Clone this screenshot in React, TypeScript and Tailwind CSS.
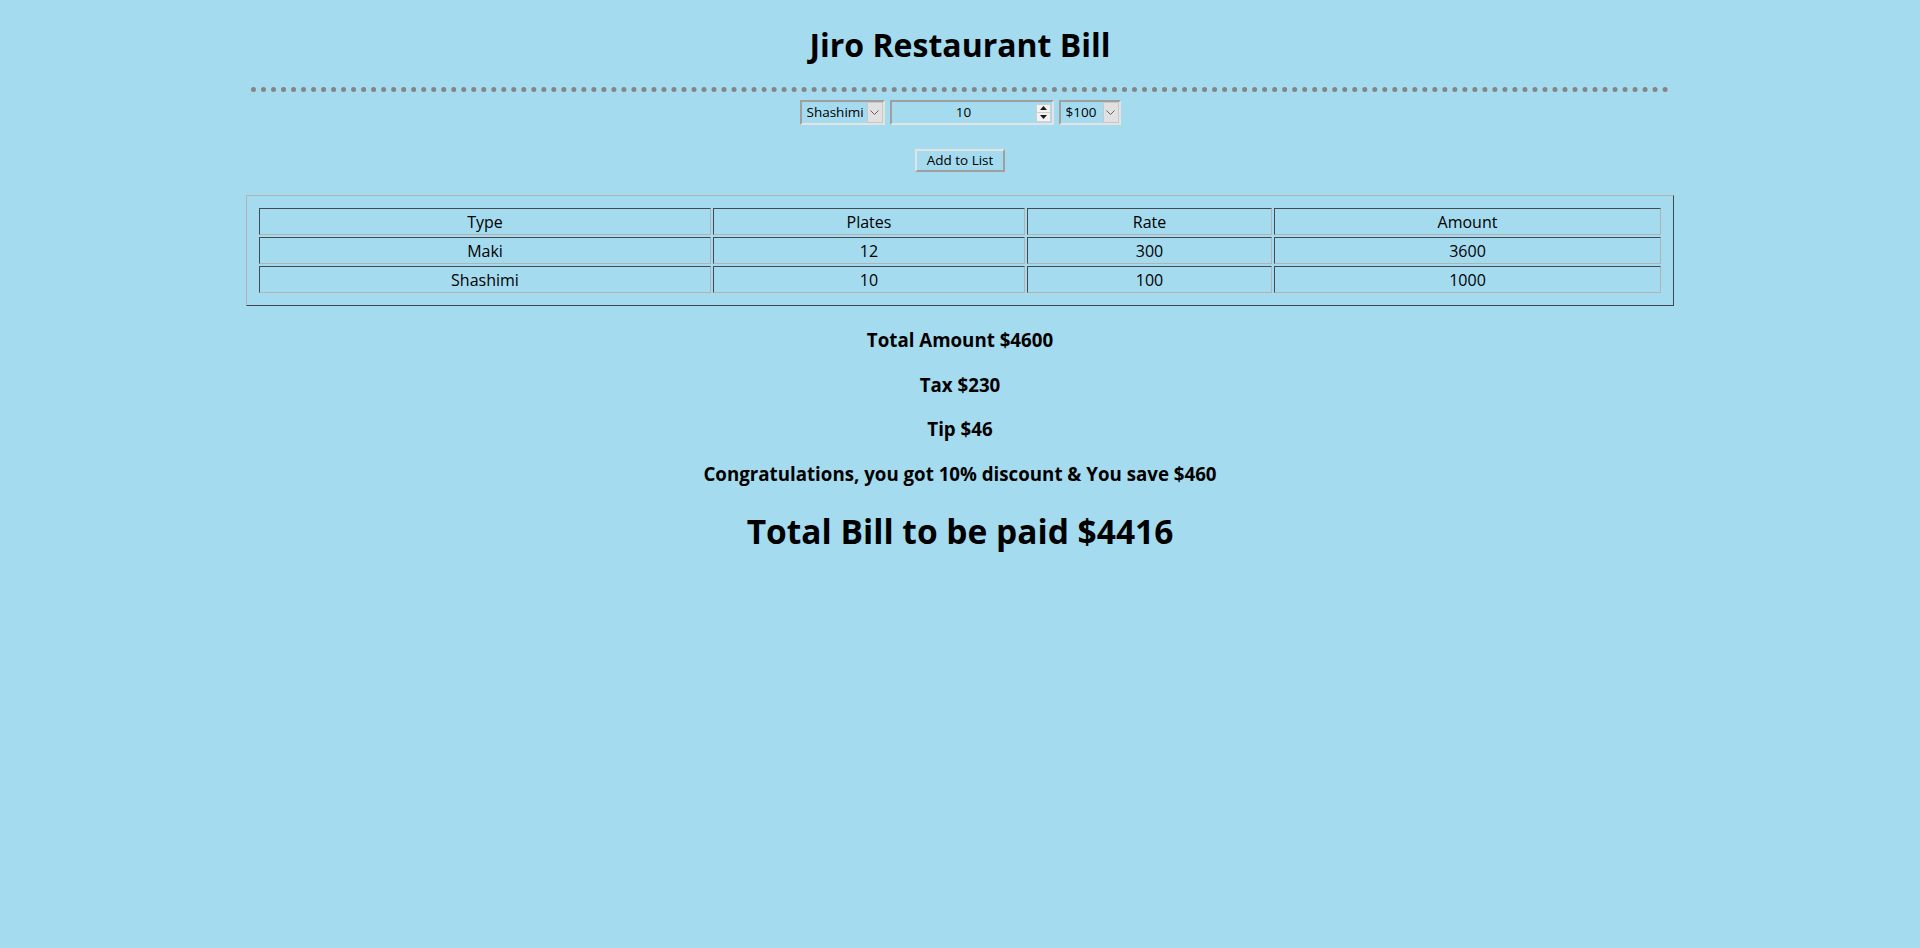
import React from "react";

type Order = {
    type: string,
    plates: number,
    rate: number,
}

const orders: Order[] = [
    { type: "Maki", plates: 12, rate: 300 },
    { type: "Shashimi", plates: 10, rate: 100 },
];

// inset / outset borders, windows classic style
const inset = "border-2 border-t-[#9f9f9f] border-l-[#9f9f9f] border-b-[#e3e3e3] border-r-[#e3e3e3]";
const outset = "border-2 border-t-[#e3e3e3] border-l-[#e3e3e3] border-b-[#9f9f9f] border-r-[#9f9f9f]";
const cellBorder = "border border-t-[#424a54] border-l-[#424a54] border-b-[#b3b3b3] border-r-[#b3b3b3]";

const ArrowBox = () => (
    <span className="flex h-[21px] w-[16px] shrink-0 items-center justify-center border border-[#c8c8c8] bg-[#e1e1e1]">
        <svg width="9" height="5" viewBox="0 0 9 5">
            <path d="M0.5 0.5 L4.5 4.5 L8.5 0.5" fill="none" stroke="#606060" strokeWidth="1" />
        </svg>
    </span>
)

const Spinner = () => (
    <span className="flex h-[18px] w-[15px] shrink-0 flex-col border border-[#cfcfcf] bg-[#f3f3f3]">
        <span className="flex flex-1 items-center justify-center border-b border-[#cfcfcf]">
            <svg width="7" height="4" viewBox="0 0 7 4"><path d="M3.5 0 L7 4 L0 4 Z" fill="#1a1a1a" /></svg>
        </span>
        <span className="flex flex-1 items-center justify-center">
            <svg width="7" height="4" viewBox="0 0 7 4"><path d="M0 0 L7 0 L3.5 4 Z" fill="#1a1a1a" /></svg>
        </span>
    </span>
)

type PickerProps = {
    width: string,
    value: string,
    options: string[],
}

const Picker = ({ width, value, options }: PickerProps) => (
    <div className={`flex h-[25px] items-center pl-[5px] ${inset} ${width}`}>
        <select
            defaultValue={value}
            className="min-w-0 flex-1 appearance-none bg-transparent text-[13.5px] outline-none"
        >
            {options.map((o) => <option key={o}>{o}</option>)}
        </select>
        <ArrowBox />
    </div>
)

export default function App() {
    const total = orders.reduce((sum, o) => sum + o.plates * o.rate, 0);
    const tax = total * 0.05;
    const tip = total * 0.01;
    const discount = total * 0.1;
    const bill = total + tax + tip - discount;

    return (
        <div className="min-h-screen bg-[#a4dbef] font-['Comic_Sans_MS','Open_Sans',sans-serif] text-black">
            <div className="mx-auto flex w-[1428px] flex-col items-center pt-[23px]">
                <h1 className="text-[32px] font-bold leading-[44px]">Jiro Restaurant Bill</h1>

                <hr className="mt-[20px] w-[1418px] border-0 border-t-[5px] border-dotted border-[#858585]" />

                <div className="mt-[8px] flex gap-[5px]">
                    <Picker width="w-[85px]" value="Shashimi" options={["Maki", "Shashimi", "Nigiri"]} />
                    <div className={`flex h-[25px] w-[164px] items-center pr-[1px] ${inset}`}>
                        <input
                            type="number"
                            defaultValue={10}
                            className="min-w-0 flex-1 bg-transparent text-center text-[13.5px] outline-none [appearance:textfield] [&::-webkit-inner-spin-button]:appearance-none [&::-webkit-outer-spin-button]:appearance-none"
                        />
                        <Spinner />
                    </div>
                    <Picker width="w-[62px]" value="$100" options={["$100", "$200", "$300"]} />
                </div>

                <button className={`mt-[24px] h-[23px] w-[90px] bg-transparent text-[13.5px] leading-none ${outset}`}>
                    Add to List
                </button>

                <div className="mt-[23px] w-full border border-t-[#b3b3b3] border-l-[#b3b3b3] border-b-[#3f4751] border-r-[#3f4751] p-[10px]">
                    <table className="w-full table-fixed border-separate border-spacing-[2px] text-[16px]">
                        <thead>
                            <tr>
                                <th className={`w-[452px] pt-[2px] font-normal leading-[23px] ${cellBorder}`}>Type</th>
                                <th className={`w-[312px] pt-[2px] font-normal leading-[23px] ${cellBorder}`}>Plates</th>
                                <th className={`w-[245px] pt-[2px] font-normal leading-[23px] ${cellBorder}`}>Rate</th>
                                <th className={`w-[387px] pt-[2px] font-normal leading-[23px] ${cellBorder}`}>Amount</th>
                            </tr>
                        </thead>
                        <tbody>
                            {orders.map((o) => (
                                <tr key={o.type}>
                                    <td className={`pt-[2px] text-center leading-[23px] ${cellBorder}`}>{o.type}</td>
                                    <td className={`pt-[2px] text-center leading-[23px] ${cellBorder}`}>{o.plates}</td>
                                    <td className={`pt-[2px] text-center leading-[23px] ${cellBorder}`}>{o.rate}</td>
                                    <td className={`pt-[2px] text-center leading-[23px] ${cellBorder}`}>{o.plates * o.rate}</td>
                                </tr>
                            ))}
                        </tbody>
                    </table>
                </div>

                <div className="mt-[21px] flex flex-col items-center gap-[18.5px] text-[18.72px] font-bold leading-[26px]">
                    <h3>Total Amount ${total}</h3>
                    <h3>Tax ${tax}</h3>
                    <h3>Tip ${tip}</h3>
                    <h3>Congratulations, you got 10% discount &amp; You save ${discount}</h3>
                </div>

                <h1 className="mt-[21px] text-[33.5px] font-bold leading-[46px]">Total Bill to be paid ${bill}</h1>
            </div>
        </div>
    )
}
